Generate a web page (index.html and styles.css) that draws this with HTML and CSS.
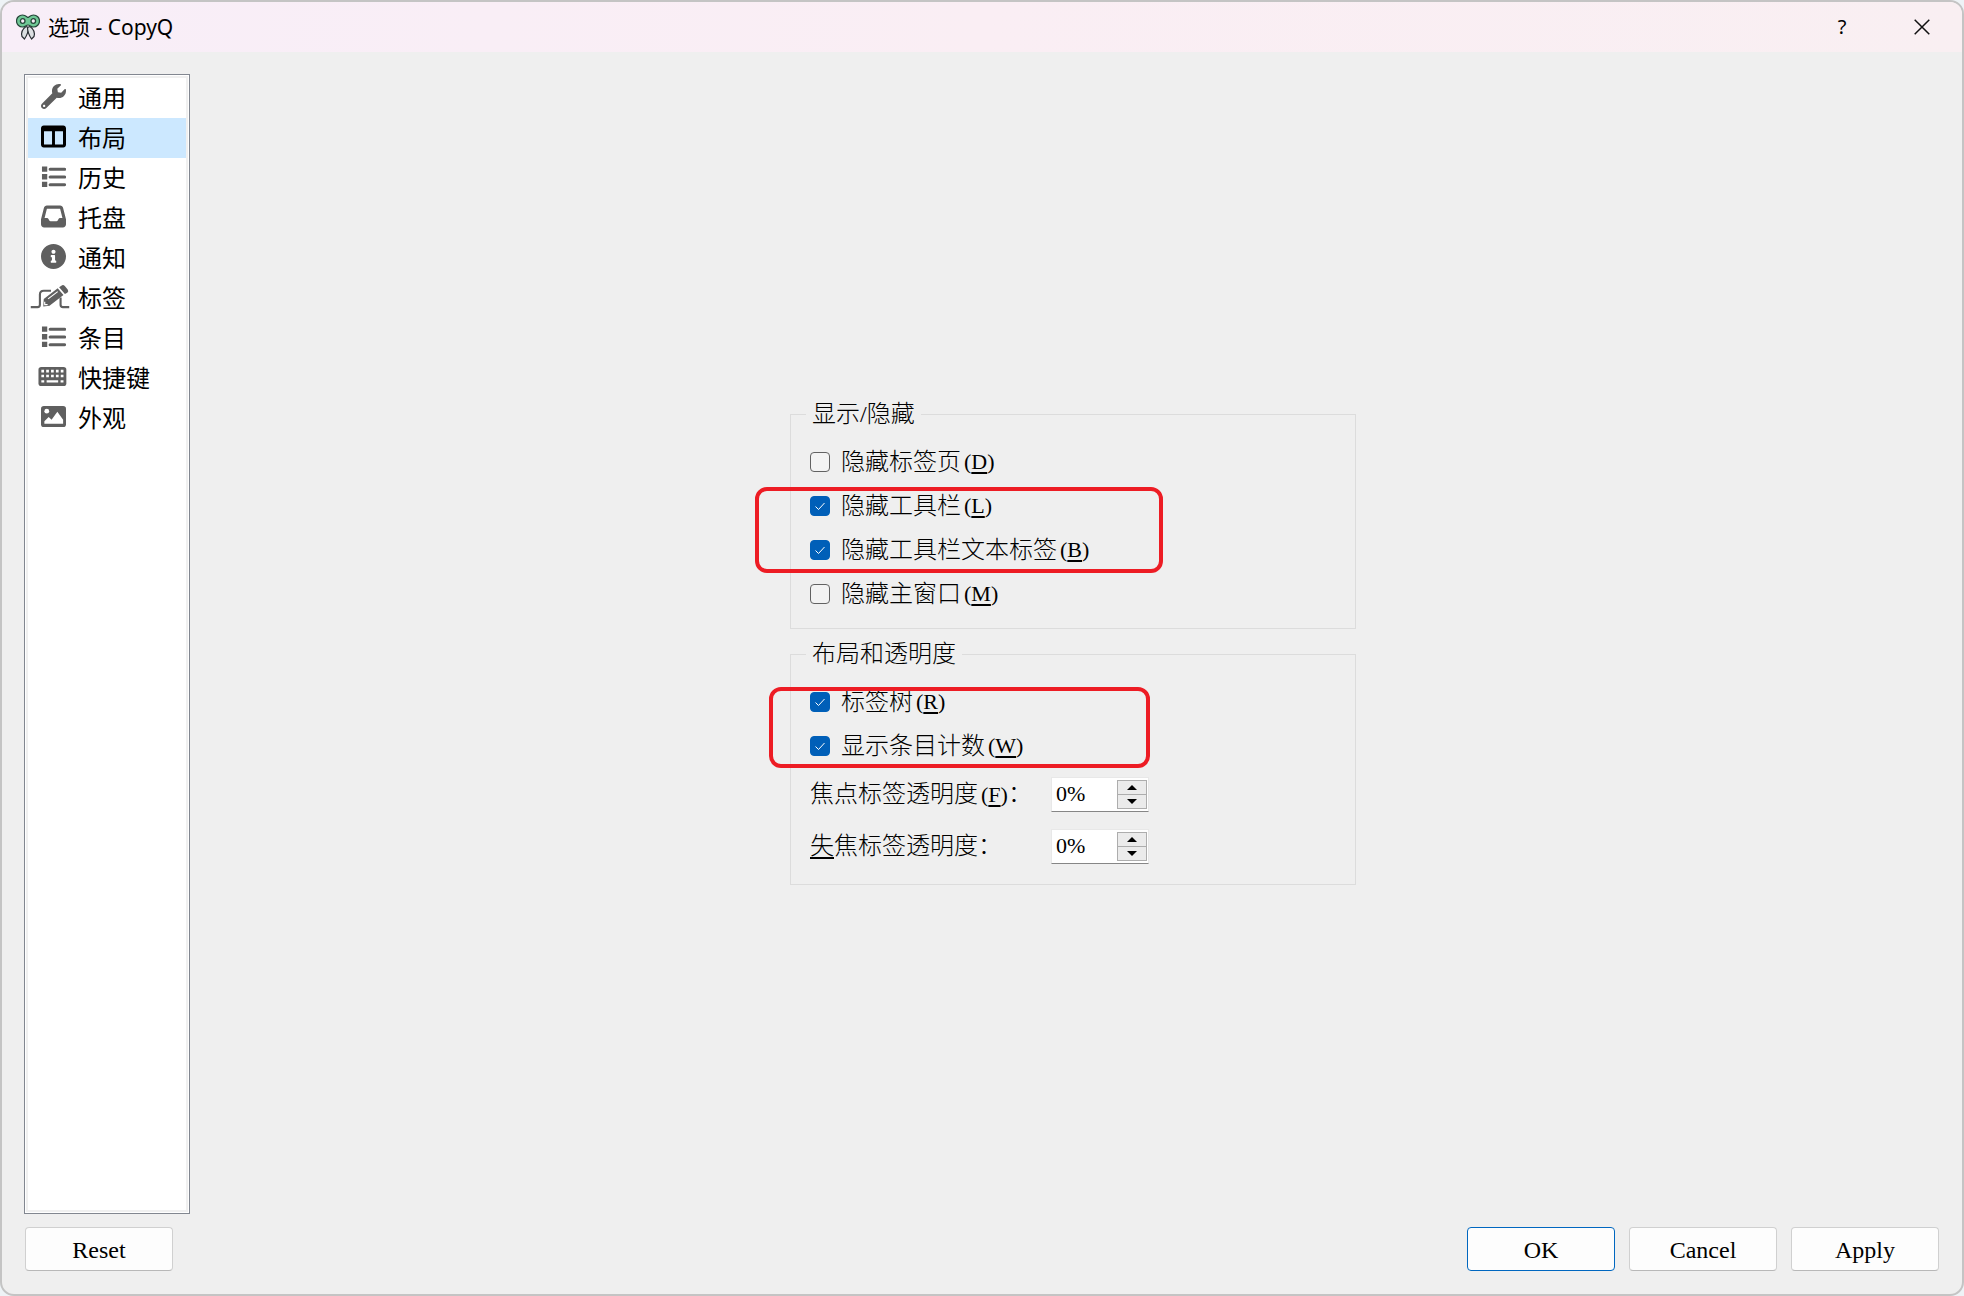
FILE: index.html
```html
<!DOCTYPE html>
<html lang="zh-CN">
<head>
<meta charset="utf-8">
<title>选项 - CopyQ</title>
<link rel="stylesheet" href="styles.css">
</head>
<body>
<div class="window">
  <header class="titlebar">
    <svg class="app-icon" viewBox="0 0 24 26" aria-hidden="true">
      <g fill="#dcdfe2" stroke="#2b3035" stroke-width="1.2" stroke-linejoin="round">
        <path d="M10 12.500C6.500 15 5 19 6 22.500L8.500 25C10.500 22 12.500 17 12.500 13.500Z"/>
        <path d="M14 12.500C17.500 15 19 19 18 22.500L15.500 25C13.500 22 11.500 17 11.500 13.500Z"/>
      </g>
      <path d="M6.500 1C10 1 11 3.500 12 3.500S14 1 17.500 1A6 6 0 0 1 17.500 13C15 13 14 11 12 11S9 13 6.500 13A6 6 0 0 1 6.500 1Z" fill="#6fc795" stroke="#26463a" stroke-width="1.200"/>
      <g fill="#f8eef8" stroke="#26463a" stroke-width="1.300"><circle cx="6.700" cy="7" r="2.300"/><circle cx="17.300" cy="7" r="2.300"/></g>
    </svg>
    <h1 class="title">选项 - CopyQ</h1>
    <button class="caption-button" type="button" aria-label="帮助">?</button>
    <button class="caption-button" type="button" aria-label="关闭">
      <svg class="close-icon" viewBox="0 0 16 16" aria-hidden="true"><path d="M.7.7l14.600 14.600M15.300.7L.7 15.300" stroke="#111" stroke-width="1.500"/></svg>
    </button>
  </header>

  <div class="content">
    <nav class="sidebar" aria-label="选项">
      <a class="item" href="#general"><svg class="icon" viewBox="0 0 512 512" aria-hidden="true"><path d="M507.730 109.100c-2.240-9.030-13.540-12.090-20.120-5.510l-74.360 74.360-67.880-11.310-11.310-67.880 74.360-74.360c6.620-6.620 3.430-17.900-5.660-20.160-47.380-11.740-99.550.91-136.580 37.930-39.640 39.640-50.550 97.100-34.050 147.200L18.740 402.760c-24.990 24.990-24.990 65.510 0 90.500 24.990 24.990 65.510 24.990 90.500 0l213.210-213.210c50.120 16.710 107.470 5.680 147.370-34.220 37.070-37.070 49.700-89.320 37.910-136.730zM64 472c-13.250 0-24-10.750-24-24 0-13.260 10.750-24 24-24s24 10.740 24 24c0 13.250-10.750 24-24 24z"/></svg>通用</a>
      <a class="item selected" href="#layout" aria-current="page"><svg class="icon" viewBox="0 0 512 512" aria-hidden="true"><path d="M456 32H56C25 32 0 57 0 88v336c0 31 25 56 56 56h400c31 0 56-25 56-56V88c0-31-25-56-56-56zM226 420H62V150h164v270zm224 0H286V150h164v270z"/></svg>布局</a>
      <a class="item" href="#history"><svg class="icon" viewBox="0 0 26 26" aria-hidden="true"><path d="M1 2.500h5.500v5.500H1zM1 10.500h5.500v5.500H1zM1 18.500h5.500v5.500H1z"/><path d="M9.500 5.500h15M9.500 13.500h15M9.500 21.500h15" stroke="#5f5f5f" stroke-width="3.200" stroke-linecap="round"/></svg>历史</a>
      <a class="item" href="#tray"><svg class="icon" viewBox="0 0 512 512" aria-hidden="true"><path d="M121 32C91.600 32 66 52 58.900 80.500L1.900 308.400C.6 313.500 0 318.700 0 323.900V416c0 35.300 28.700 64 64 64H448c35.300 0 64-28.700 64-64V323.900c0-5.200-.6-10.400-1.900-15.500l-57-227.900C446 52 420.400 32 391 32H121zm0 64H391l48 192H387.800c-12.100 0-23.200 6.800-28.600 17.700l-14.300 28.600c-5.400 10.800-16.500 17.700-28.600 17.700H195.800c-12.100 0-23.200-6.800-28.600-17.700l-14.300-28.600c-5.400-10.800-16.500-17.700-28.600-17.700H73L121 96z"/></svg>托盘</a>
      <a class="item" href="#notifications"><svg class="icon" viewBox="0 0 512 512" aria-hidden="true"><path d="M256 0C114 0 0 115 0 256s114 256 256 256 256-115 256-256S398 0 256 0zm0 118c23.196 0 42 18.804 42 42s-18.804 42-42 42-42-18.804-42-42 18.804-42 42-42zm56 254c0 6.627-5.373 12-12 12h-88c-6.627 0-12-5.373-12-12v-24c0-6.627 5.373-12 12-12h12v-64h-12c-6.627 0-12-5.373-12-12v-24c0-6.627 5.373-12 12-12h64c6.627 0 12 5.373 12 12v100h12c6.627 0 12 5.373 12 12v24z"/></svg>通知</a>
      <a class="item" href="#tabs"><svg class="icon icon-wide" viewBox="0 0 40 26" aria-hidden="true"><path d="M0 24h7q2.500 0 2.500-2.500V11q0-4 4-4H21M31 14v7.500q0 2.500 2.500 2.500H40" fill="none" stroke="#5f5f5f" stroke-width="2.200"/><path d="M13.500 15.500L28 4.500l6 7L19.500 22.500l-6.500.8zM29.500 3.400l2.300-1.700q2-1.400 3.600.4l3 3.500q1.400 2-.4 3.500l-2.500 1.400z"/><path d="M18 15.500l10-7.600M14.500 18.500v3h3" fill="none" stroke="#fff" stroke-width="1.200"/></svg>标签</a>
      <a class="item" href="#items"><svg class="icon" viewBox="0 0 26 26" aria-hidden="true"><path d="M1 2.500h5.500v5.500H1zM1 10.500h5.500v5.500H1zM1 18.500h5.500v5.500H1z"/><path d="M9.500 5.500h15M9.500 13.500h15M9.500 21.500h15" stroke="#5f5f5f" stroke-width="3.200" stroke-linecap="round"/></svg>条目</a>
      <a class="item" href="#shortcuts"><svg class="icon icon-wide" viewBox="0 0 40 26" aria-hidden="true"><rect x="8" y="3" width="29" height="20" rx="3"/><path d="M11 7.500h23M11 12.500h23" stroke="#fff" stroke-width="2.800" stroke-dasharray="2.800 2.250"/><path d="M11 18h3M16.500 18h12M31 18h3" stroke="#fff" stroke-width="2.400"/></svg>快捷键</a>
      <a class="item" href="#appearance"><svg class="icon" viewBox="0 0 26 26" aria-hidden="true"><rect x="0" y="2" width="26" height="22" rx="3"/><circle cx="6" cy="7.500" r="2.500" fill="#fff"/><path d="M3.500 20.500v-2.500l4.500-4.500 3 3 6-8.500 6 8.500v4z" fill="#fff"/></svg>外观</a>
    </nav>

    <main class="page">
      <form class="groups">
        <fieldset class="group">
          <legend>显示/隐藏</legend>
          <label class="check"><input type="checkbox">隐藏标签页<span class="key">(<u>D</u>)</span></label>
          <div class="marked marked-toolbar">
            <label class="check"><input type="checkbox" checked>隐藏工具栏<span class="key">(<u>L</u>)</span></label>
            <label class="check"><input type="checkbox" checked>隐藏工具栏文本标签<span class="key">(<u>B</u>)</span></label>
          </div>
          <label class="check"><input type="checkbox">隐藏主窗口<span class="key">(<u>M</u>)</span></label>
        </fieldset>
        <fieldset class="group">
          <legend>布局和透明度</legend>
          <div class="marked marked-tree">
            <label class="check"><input type="checkbox" checked>标签树<span class="key">(<u>R</u>)</span></label>
            <label class="check"><input type="checkbox" checked>显示条目计数<span class="key">(<u>W</u>)</span></label>
          </div>
          <div class="field">
            <label for="focused">焦点标签透明度<span class="key">(<u>F</u>)</span>：</label>
            <div class="spin">
              <input id="focused" type="text" value="0%">
              <div class="steps"><button type="button" class="up" aria-label="增加"></button><button type="button" class="down" aria-label="减少"></button></div>
            </div>
          </div>
          <div class="field">
            <label for="unfocused"><u>失</u>焦标签透明度：</label>
            <div class="spin">
              <input id="unfocused" type="text" value="0%">
              <div class="steps"><button type="button" class="up" aria-label="增加"></button><button type="button" class="down" aria-label="减少"></button></div>
            </div>
          </div>
        </fieldset>
      </form>
    </main>
  </div>

  <footer class="actions">
    <button class="push reset" type="button">Reset</button>
    <button class="push primary" type="button">OK</button>
    <button class="push" type="button">Cancel</button>
    <button class="push" type="button">Apply</button>
  </footer>
</div>
</body>
</html>
```
FILE: styles.css
```css
*, ::before, ::after { box-sizing: border-box; }

body {
  margin: 0;
  background: #eef3f6;
  color: #000;
  font: 24px/28px "Liberation Serif", "Noto Sans CJK SC", serif;
}

button, input { font: inherit; color: inherit; }

.window {
  display: flex;
  flex-direction: column;
  min-height: 100vh;
  border: 2px solid #c4c4c4;
  border-radius: 14px;
  background: #efefef;
  overflow: hidden;
}

/* Title bar */
.titlebar {
  display: flex;
  align-items: center;
  height: 50px;
  padding-left: 14px;
  background: linear-gradient(90deg, #f8eef8, #faeef4 50%, #f9eff2);
  font-family: "Noto Sans", "Noto Sans CJK SC", sans-serif;
}

.app-icon { width: 24px; height: 26px; }

.title {
  flex: 1;
  margin: 0 0 0 8px;
  font-size: 21px;
  font-weight: 400;
}

.caption-button {
  display: grid;
  place-items: center;
  width: 80px;
  height: 50px;
  padding: 0;
  border: 0;
  background: none;
  font-size: 20px;
}

.close-icon { width: 16px; height: 16px; }

/* Body */
.content {
  flex: 1;
  display: flex;
  gap: 18px;
  padding: 22px 24px 13px 22px;
}

.sidebar {
  width: 166px;
  padding: 1px;
  border: 1px solid #828790;
  background: #fff;
  box-shadow: inset 0 0 0 1px #fff, inset 0 0 0 3px #f0f0f0;
  font-family: "Noto Sans CJK SC", sans-serif;
}

.item {
  display: flex;
  align-items: center;
  height: 40px;
  margin: 0 2px;
  padding: 0 0 3px 13px;
  gap: 12px;
  color: #000;
  text-decoration: none;
}

.item:first-child { margin-top: 2px; }
.item.selected { background: #cce8ff; }

.icon { width: 25px; height: 25px; fill: #5f5f5f; }
.icon-wide { width: 40px; margin: 0 -4px 0 -11px; }
.selected .icon { fill: #000; }

.page {
  flex: 1;
  display: grid;
  place-items: center;
  padding-bottom: 3px;
}

.groups {
  display: grid;
  gap: 11px;
  width: 566px;
}

.group {
  min-width: 0;
  margin: 0;
  padding: 12px 19px;
  border: 1px solid #dcdcdc;
}

.group legend {
  margin-left: -4px;
  padding: 0 6px;
}

.group, .group legend { font-weight: 300; }

.check {
  display: flex;
  align-items: center;
  height: 44px;
}

.check input {
  appearance: none;
  width: 20px;
  height: 20px;
  margin: 0 11px 0 0;
  border: 1px solid #626262;
  border-radius: 4px;
  background: #f3f3f3;
}

.check input:checked {
  border-color: #005fb8;
  background: #005fb8 url("data:image/svg+xml,%3Csvg xmlns='http://www.w3.org/2000/svg' viewBox='0 0 18 18'%3E%3Cpath d='M4.500 9.500l3 3 6-6.500' fill='none' stroke='white' stroke-width='1'/%3E%3C/svg%3E") center / 18px 18px no-repeat;
}

/* Access key shown after an option's name */
.key { padding-left: 3px; font-size: 22px; }

u { text-underline-offset: 3px; text-decoration-thickness: 2px; }

.field {
  display: grid;
  grid-template-columns: 241px 98px;
  align-items: center;
  height: 52px;
}

.spin {
  display: flex;
  height: 35px;
  padding: 2px 1px 2px 2px;
  border: 1px solid #e8e8e8;
  border-bottom-color: #868686;
  background: #fff;
}

.spin input {
  flex: 1;
  min-width: 0;
  padding: 0 0 0 2px;
  border: 0;
  background: none;
  font-size: 22px;
}

.steps {
  display: grid;
  grid-template-rows: 1fr 1fr;
  width: 30px;
  border: 1px solid #adadad;
}

.steps button {
  display: grid;
  place-items: center;
  min-height: 0;
  padding: 0;
  border: 0;
  background: #ebebeb;
}

.steps .down { border-top: 1px solid #adadad; }

.steps button::before {
  content: "";
  border: 5px solid transparent;
}

.steps .up::before { border-top: 0; border-bottom-color: #000; }
.steps .down::before { border-bottom: 0; border-top-color: #000; }

/* Red frames laid over pairs of options */
.marked { position: relative; }

.marked::after {
  content: "";
  position: absolute;
  border: 4px solid #ed1c24;
  border-radius: 12px;
  pointer-events: none;
}

.marked-toolbar::after { left: -55px; top: 3px; width: 408px; height: 86px; }
.marked-tree::after { left: -41px; top: 7px; width: 381px; height: 81px; }

/* Buttons */
.actions {
  display: flex;
  gap: 14px;
  padding: 0 23px 23px 23px;
}

.push {
  width: 148px;
  height: 44px;
  padding: 2px 0 0;
  border: 1px solid #d0d0d0;
  border-bottom-color: #b8b8b8;
  border-radius: 4px;
  background: #fdfdfd;
}

.push.primary { border-color: #0067c0; }
.reset { margin-right: auto; }
```
